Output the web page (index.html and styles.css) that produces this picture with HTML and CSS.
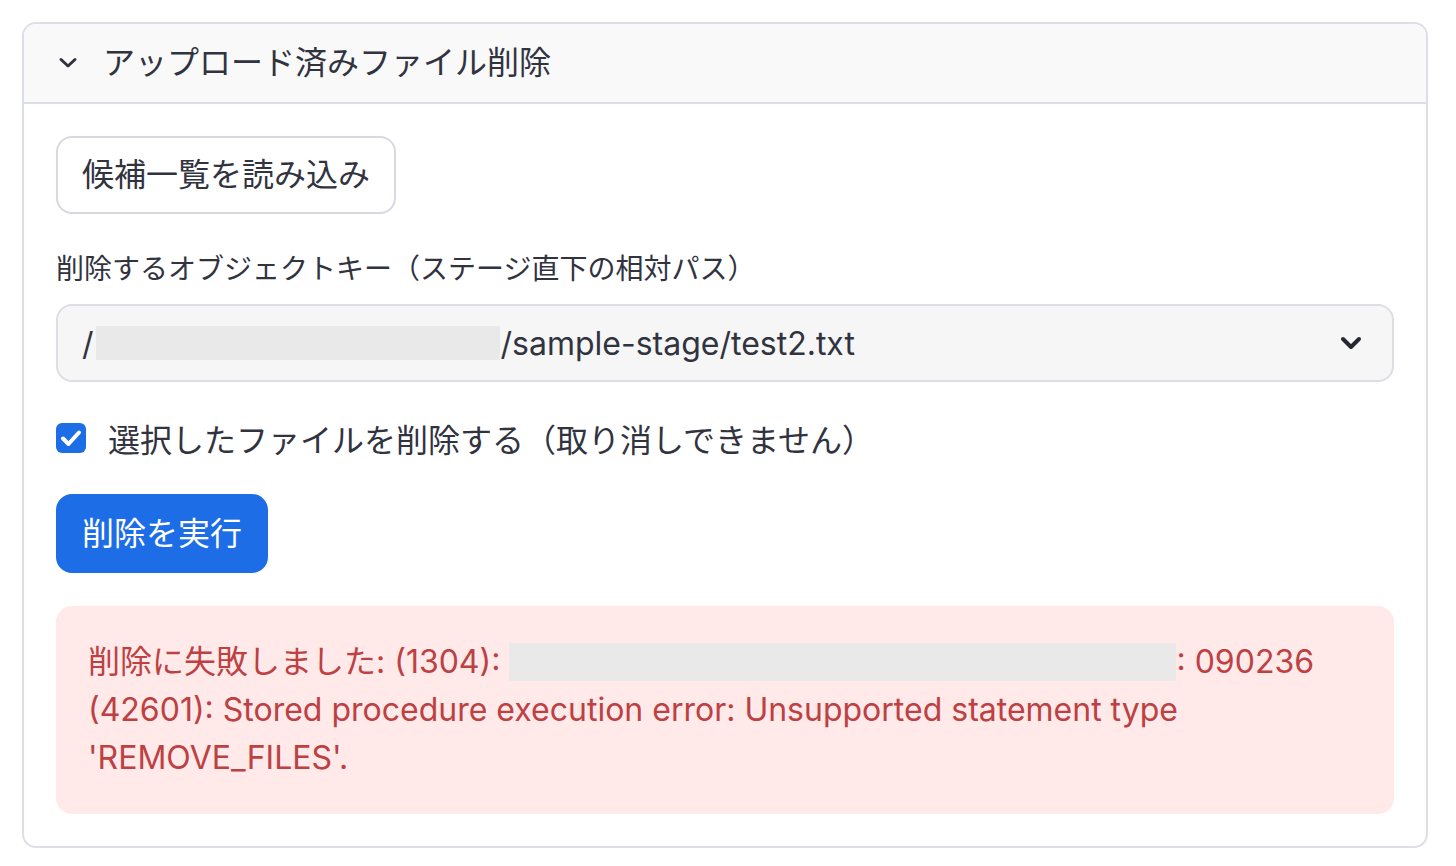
FILE: index.html
```html
<!DOCTYPE html>
<html lang="ja">
<head>
<meta charset="utf-8">
<title>アップロード済みファイル削除</title>
<link rel="stylesheet" href="styles.css">
</head>
<body>
<div class="card">
  <div class="card-header">
    <svg class="hdr-chevron" width="20" height="12" viewBox="0 0 20 12"><path d="M3 2.5 L10 9 L17 2.5" fill="none" stroke="#31333f" stroke-width="3" stroke-linecap="round" stroke-linejoin="round"/></svg>
    <span class="card-title">アップロード済みファイル削除</span>
  </div>
  <div class="card-body">
    <div class="row"><button class="btn btn-secondary">候補一覧を読み込み</button></div>
    <div class="field">
      <div class="field-label">削除するオブジェクトキー（ステージ直下の相対パス）</div>
      <div class="select">
        <span class="select-value">/<span class="redact redact-select"></span>/sample-stage/test2.txt</span>
        <svg class="select-chevron" width="22" height="14" viewBox="0 0 22 14"><path d="M3 3 L11 11 L19 3" fill="none" stroke="#262730" stroke-width="4" stroke-linecap="round" stroke-linejoin="round"/></svg>
      </div>
    </div>
    <label class="check-row">
      <span class="checkbox"><svg width="22" height="18" viewBox="0 0 22 18"><path d="M3 9.5 L8.5 15 L19 3.5" fill="none" stroke="#fff" stroke-width="4" stroke-linecap="round" stroke-linejoin="round"/></svg></span>
      <span class="check-label">選択したファイルを削除する（取り消しできません）</span>
    </label>
    <div class="row"><button class="btn btn-primary">削除を実行</button></div>
    <div class="alert">削除に失敗しました: (1304): <span class="redact redact-alert"></span>: 090236<br>(42601): Stored procedure execution error: Unsupported statement type<br>'REMOVE_FILES'.</div>
  </div>
</div>
</body>
</html>
```
FILE: styles.css
```css
html, body {
  margin: 0;
  padding: 0;
  background: #ffffff;
}
body {
  font-family: "Inter", "Noto Sans CJK JP", sans-serif;
  color: #31333f;
  padding: 22px 28px 0 22px;
}
.card {
  border: 2px solid #dcdfe8;
  border-radius: 14px;
  overflow: hidden;
  width: 1402px;
  box-sizing: content-box;
}
.card-header {
  height: 78px;
  background: #f9f9fa;
  border-bottom: 2px solid #dcdfe8;
  display: flex;
  align-items: center;
  padding-left: 34px;
}
.hdr-chevron {
  display: block;
  margin-top: 0;
}
.card-title {
  margin-left: 25px;
  font-size: 32px;
  line-height: 40px;
  color: #31333f;
}
.card-body {
  padding: 32px 32px 32px 32px;
  display: flex;
  flex-direction: column;
  gap: 32px;
}
.row {
  display: flex;
}
.btn {
  font-family: "Inter", "Noto Sans CJK JP", sans-serif;
  font-size: 32px;
  height: 78px;
  padding: 0 24px;
  border-radius: 16px;
  cursor: pointer;
  line-height: 1;
}
.btn-secondary {
  background: #ffffff;
  border: 2px solid #d6d9e2;
  color: #31333f;
}
.btn-primary {
  background: #1c6de6;
  border: 2px solid #1c6de6;
  color: #ffffff;
  height: 79px;
}
.field {
  display: flex;
  flex-direction: column;
}
.field-label {
  font-size: 28px;
  line-height: 46px;
  margin-bottom: 12px;
  color: #31333f;
}
.select {
  height: 74px;
  border: 2px solid #dcdee4;
  border-radius: 16px;
  background: #f6f6f7;
  display: flex;
  align-items: center;
  justify-content: space-between;
  padding: 0 30px 0 24px;
}
.select-value {
  font-size: 32px;
  color: #31333f;
  display: flex;
  align-items: center;
}
.redact {
  display: inline-block;
  background: #e9e9e9;
}
.redact-select {
  width: 404px;
  height: 34px;
  margin-left: 2px;
  margin-right: 1px;
}
.select-chevron {
  display: block;
}
.check-row {
  display: flex;
  align-items: center;
  height: 48px;
  gap: 22px;
}
.checkbox {
  width: 30px;
  height: 30px;
  border-radius: 6px;
  background: #1c6de6;
  display: flex;
  align-items: center;
  justify-content: center;
}
.checkbox svg {
  display: block;
}
.check-label {
  font-size: 32px;
  color: #31333f;
}
.alert {
  margin-top: 1px;
  background: #ffe9e9;
  border-radius: 16px;
  padding: 32px 32px 32px 32px;
  font-size: 32px;
  line-height: 48px;
  color: #bd4043;
}
.redact-alert {
  width: 667px;
  height: 38px;
  vertical-align: -8px;
}
```
